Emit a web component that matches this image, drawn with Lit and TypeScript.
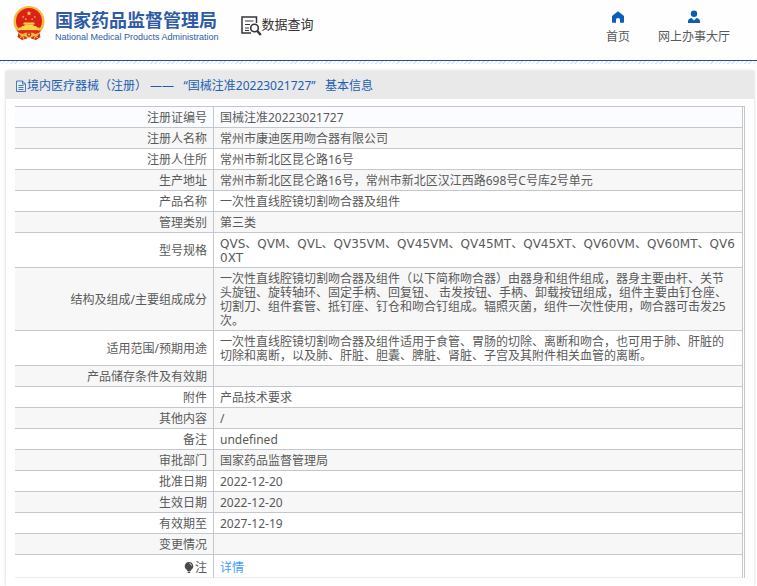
import { LitElement, html, css, svg } from "lit";
import { customElement } from "lit/decorators.js";

interface Row {
  label: string;
  value: string;
  kind?: string;
}

const rows: Row[] = [
  { label: "注册证编号", value: "国械注准20223021727" },
  { label: "注册人名称", value: "常州市康迪医用吻合器有限公司" },
  { label: "注册人住所", value: "常州市新北区昆仑路16号" },
  { label: "生产地址", value: "常州市新北区昆仑路16号，常州市新北区汉江西路698号C号库2号单元" },
  { label: "产品名称", value: "一次性直线腔镜切割吻合器及组件" },
  { label: "管理类别", value: "第三类" },
  {
    label: "型号规格",
    value: "QVS、QVM、QVL、QV35VM、QV45VM、QV45MT、QV45XT、QV60VM、QV60MT、QV6\n0XT",
    kind: "models",
  },
  {
    label: "结构及组成/主要组成成分",
    value:
      "一次性直线腔镜切割吻合器及组件（以下简称吻合器）由器身和组件组成，器身主要由杆、关节头旋钮、旋转轴环、固定手柄、回复钮、 击发按钮、手柄、卸载按钮组成，组件主要由钉仓座、切割刀、组件套管、抵钉座、钉仓和吻合钉组成。辐照灭菌，组件一次性使用，吻合器可击发25次。",
  },
  {
    label: "适用范围/预期用途",
    value:
      "一次性直线腔镜切割吻合器及组件适用于食管、胃肠的切除、离断和吻合，也可用于肺、肝脏的切除和离断，以及肺、肝脏、胆囊、脾脏、肾脏、子宫及其附件相关血管的离断。",
  },
  { label: "产品储存条件及有效期", value: "" },
  { label: "附件", value: "产品技术要求" },
  { label: "其他内容", value: "/" },
  { label: "备注", value: "undefined" },
  { label: "审批部门", value: "国家药品监督管理局" },
  { label: "批准日期", value: "2022-12-20" },
  { label: "生效日期", value: "2022-12-20" },
  { label: "有效期至", value: "2027-12-19" },
  { label: "变更情况", value: "" },
];

const star = (x: number, y: number, r: number) => {
  const points = Array.from({ length: 10 }, (_, i) => {
    const radius = i % 2 ? r * 0.4 : r;
    const angle = (Math.PI * i) / 5 - Math.PI / 2;
    return `${(x + radius * Math.cos(angle)).toFixed(2)},${(y + radius * Math.sin(angle)).toFixed(2)}`;
  }).join(" ");
  return svg`<polygon points=${points} fill="#fbd548" />`;
};

const emblem = html`<svg class="emblem" viewBox="0 0 32 34" aria-hidden="true">
  <path d="M6 25 4.500 31 9 34 14 32.500 16 30 18 32.500 23 34 27.500 31 26 25Z" fill="#d92a1c" />
  <circle cx="16" cy="15.500" r="15.500" fill="#f3bd3c" />
  <circle cx="16" cy="15" r="13" fill="#dc2217" />
  ${star(16, 7.4, 2.6)} ${star(10.2, 11, 1.2)} ${star(12.8, 13.2, 1.2)} ${star(19.2, 13.2, 1.2)}
  ${star(21.8, 11, 1.2)}
  <path d="M11 16.500h10l1 1.800H10zM11.500 18.500h9v1.500h2.500l1 1.500h2.500v2.800H5.500v-2.800H8L9 20h2.500z" fill="#fbd548" />
  <path d="M4 24.500h24l-3.500 4-4.500-1-2 2h-4l-2-2-4.500 1z" fill="#d92a1c" />
  <path d="M5 26.500 10 28l2-1.200h8l2 1.200 5-1.500-3 4-4-.5-2 2h-4l-2-2-4 .5z" fill="#efb83a" />
  <circle cx="16" cy="28.500" r="2.200" fill="#d92a1c" />
  <circle cx="16" cy="28.500" r="1" fill="#fbd548" />
  <path d="M7 31.500 10 30.500 11 33.500M25 31.500 22 30.500 21 33.500" fill="none" stroke="#f3bd3c" />
</svg>`;

@customElement("app-root")
export class AppRoot extends LitElement {
  static styles = css`
    :host {
      display: block;
      font: 12px/14px "Noto Sans", "Noto Sans CJK SC", sans-serif;
      color: #5a5a5a;
      background: #fff;
    }
    a {
      text-decoration: none;
      color: inherit;
    }
    .top {
      display: flex;
      align-items: flex-start;
      height: 60px;
      padding: 0 27px 0 13px;
      background: #fefefe;
      box-sizing: border-box;
    }
    .brand {
      display: flex;
      gap: 10px;
      padding-top: 6px;
      color: #2f5ba6;
    }
    .emblem {
      width: 32px;
      height: 34px;
    }
    .names {
      display: flex;
      flex-direction: column;
      padding-top: 2px;
      white-space: nowrap;
    }
    .cn {
      font: bold 18px/22px "Noto Sans CJK SC", sans-serif;
    }
    .en {
      font: 9px/14px "Liberation Sans", sans-serif;
    }
    .query {
      display: flex;
      align-items: center;
      margin: 14px 0 0 22px;
      font: 13px/20px "Noto Sans CJK SC", sans-serif;
      color: #333;
      white-space: nowrap;
    }
    .query span {
      padding-bottom: 3px;
    }
    .query svg {
      width: 21px;
      height: 21px;
    }
    .nav {
      display: flex;
      gap: 28px;
      margin-left: auto;
      padding-top: 10px;
      white-space: nowrap;
    }
    .nav a {
      display: flex;
      flex-direction: column;
      align-items: center;
      gap: 6px;
    }
    .nav svg {
      width: 14px;
      height: 14px;
    }
    .rule {
      height: 1px;
      background: #1d529b;
    }
    .hatch {
      height: 3px;
      background: repeating-linear-gradient(135deg, #d3e4f5 0 1px, #fff 1px 3px);
    }
    .card {
      margin: 7px 3px 0 6px;
      background: #fff;
      box-shadow: 0 0 3px #ccc;
    }
    h1 {
      display: flex;
      align-items: center;
      height: 28px;
      margin: 0;
      padding: 2px 9px 0;
      box-sizing: border-box;
      background: #e9e9e9;
      color: #1b5fb4;
      font: inherit;
      white-space: pre;
    }
    h1 svg {
      width: 12px;
      height: 12px;
    }
    .body {
      padding: 7px 9px 8px;
    }
    table {
      width: 100%;
      border-collapse: separate;
      border-spacing: 0;
      table-layout: fixed;
      border-top: 1px solid #c4c7cb;
      border-right: 1px solid #c4c7cb;
      padding-right: 1px;
    }
    .label {
      width: 199px;
    }
    th,
    td {
      box-sizing: border-box;
      padding: 4px 7px 2px 6px;
      height: 21px;
      font-weight: normal;
      border-right: 1px solid #c4c7cb;
      border-bottom: 1px solid #c4c7cb;
      word-break: break-all;
    }
    th {
      padding-right: 6px;
      text-align: right;
    }
    td {
      text-align: left;
      white-space: pre-line;
    }
    .models {
      font-family: "DejaVu Sans", "Noto Sans CJK SC", sans-serif;
    }
    tr:nth-child(even) {
      background: #f7f7f7;
    }
    tr:first-child {
      background: #fafcff;
    }
    .note th,
    .note td {
      height: 23px;
      padding-top: 6px;
      border-bottom-color: #ececec;
    }
    .note {
      background: #fff;
    }
    .note a {
      color: #409eff;
    }
    .note svg {
      width: 10px;
      height: 11px;
      margin-right: 1px;
      vertical-align: -1px;
    }
  `;

  render() {
    return html`
      <header class="top">
        <a class="brand" href="#">
          ${emblem}
          <span class="names">
            <span class="cn">国家药品监督管理局</span>
            <span class="en">National Medical Products Administration</span>
          </span>
        </a>
        <a class="query" href="#">
          <svg viewBox="0 0 21 21" fill="none" stroke="#34343e" aria-hidden="true">
            <path d="M15.500 8V2H1v16h9" stroke-width="1.500" />
            <path d="M4 6h8.500M4 9.500h5M4 13h4M4 15.500h4" stroke-width="1.200" />
            <circle cx="13.500" cy="13" r="3.800" stroke-width="1.600" />
            <path d="m16.300 16 3.500 4" stroke-width="2.400" />
          </svg>
          <span>数据查询</span>
        </a>
        <nav class="nav">
          <a href="#">
            <svg viewBox="0 0 14 14" fill="#0d5cb8" aria-hidden="true">
              <path d="M7 1.200 13 6v6q0 .8-.8.800H9V9.500q0-1.500-2-1.500t-2 1.500v3.300H1.800Q1 12.800 1 12V6z" />
            </svg>
            <span>首页</span>
          </a>
          <a href="#">
            <svg viewBox="0 0 14 14" fill="#0d5cb8" aria-hidden="true">
              <circle cx="7" cy="3.800" r="3.200" />
              <path d="M1 13v-1.500Q1 8.500 4.500 8L7 10.500 9.500 8Q13 8.500 13 11.500V13z" />
            </svg>
            <span>网上办事大厅</span>
          </a>
        </nav>
      </header>
      <div class="rule"></div>
      <div class="hatch"></div>
      <main class="card">
        <h1><svg viewBox="0 0 12 12" fill="none" stroke="#1b5fb4" aria-hidden="true"><path d="M1.500 1h6l3 3v7.500h-9zM7.500 1v3h3M3.500 5.500h5M3.500 7.500h5M3.500 9.500h5" stroke-width=".8" /></svg><span>境内医疗器械（注册） ——   “国械注准20223021727”   基本信息</span></h1>
        <div class="body">
          <table>
            <colgroup>
              <col class="label" />
              <col />
            </colgroup>
            <tbody>
              ${rows.map(
                (row) => html`<tr>
                  <th scope="row">${row.label}</th>
                  <td class=${row.kind ?? "plain"}>${row.value}</td>
                </tr>`
              )}
              <tr class="note">
                <th scope="row"><svg viewBox="0 0 10 11" aria-hidden="true"><path d="M5 0a4.200 4.200 0 0 1 2.500 7.600L6.500 9h-3l-1-1.400A4.200 4.200 0 0 1 5 0zM3.800 9.500h2.400V11H3.800z" fill="#4a4a4a" /><path d="M5.500 1.600q1.800.2 2.100 2" fill="none" stroke="#fff" stroke-width=".8" /></svg>注</th>
                <td><a href="#">详情</a></td>
              </tr>
            </tbody>
          </table>
        </div>
      </main>
    `;
  }
}
